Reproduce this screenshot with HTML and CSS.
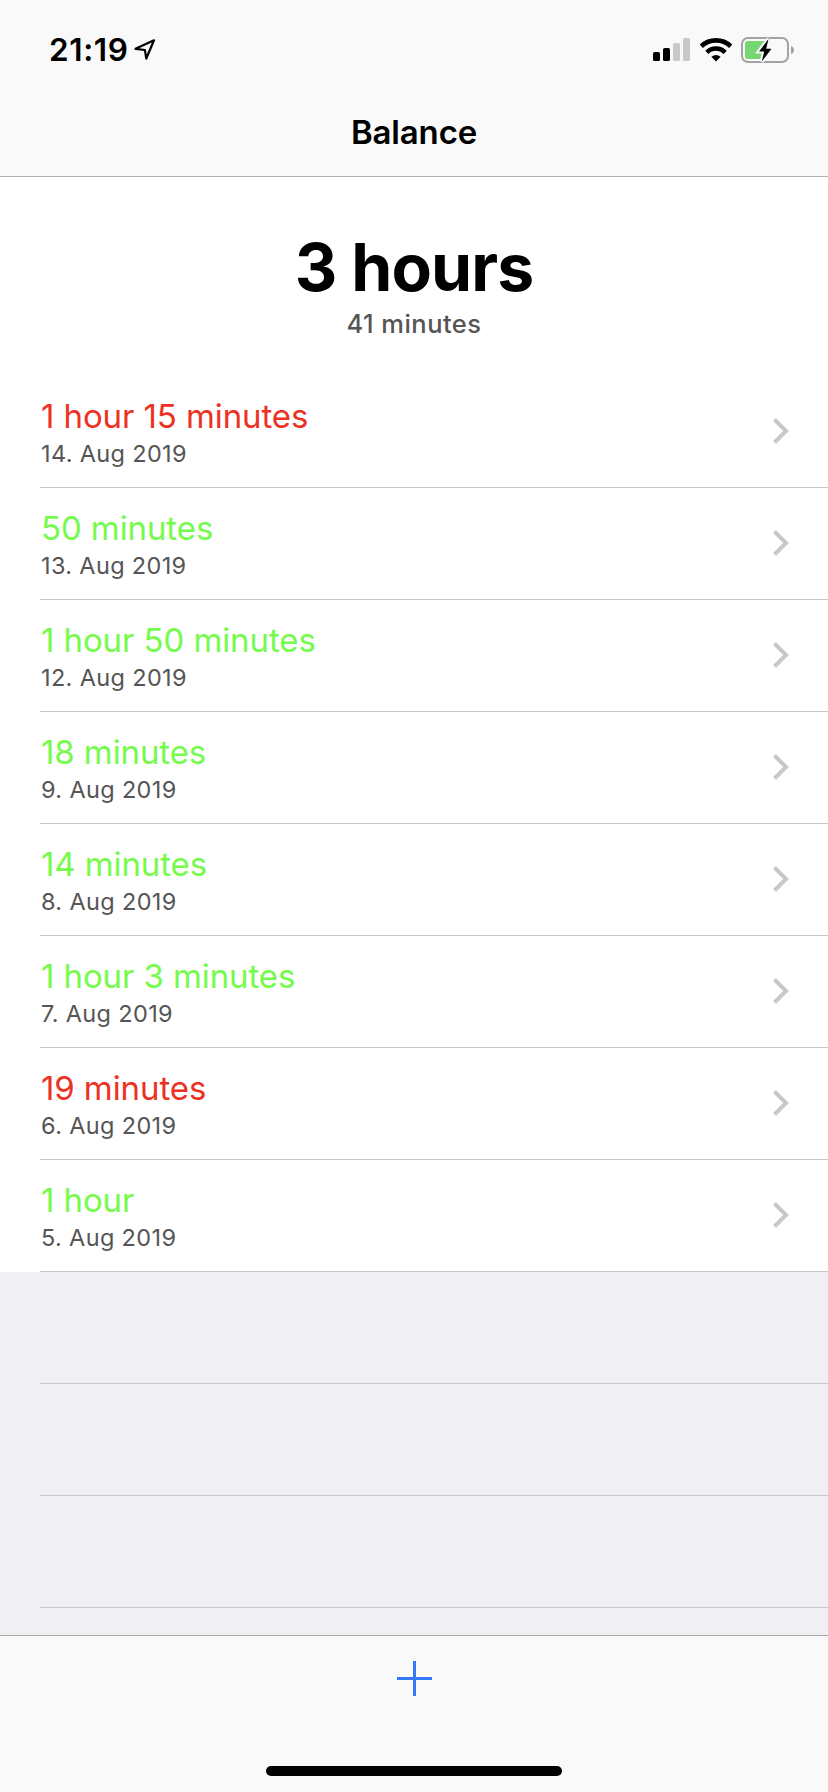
FILE: index.html
```html
<!DOCTYPE html>
<html lang="en">
<head>
    <meta charset="UTF-8">
    <meta name="viewport" content="width=device-width, initial-scale=1.0">
    <title>Balance</title>
    <link rel="stylesheet" href="styles.css">
</head>
<body>
    <div class="screen">
        <header class="navbar">
            <div class="status">
                <div class="clock">
                    <span class="time">21:19</span>
                    <svg class="location" width="24" height="24" viewBox="0 0 24 24">
                        <path d="M2.5 10.8 L21 2.3 L13.3 20.5 L11.9 12 Z" fill="none" stroke="#000" stroke-width="2.2" stroke-linejoin="round"/>
                    </svg>
                </div>
                <div class="indicators">
                    <svg width="37" height="24" viewBox="0 0 37 24">
                        <rect x="0" y="14" width="7" height="9" rx="1.6"/>
                        <rect x="10" y="10" width="7" height="13" rx="1.6"/>
                        <rect x="20" y="5" width="7" height="18" rx="1.6" fill="#c8c8c8"/>
                        <rect x="30" y="0" width="7" height="23" rx="1.6" fill="#c8c8c8"/>
                    </svg>
                    <svg class="wifi" width="34" height="24" viewBox="0 0 34 24">
                        <path d="M2.3 8.2 A21.5 21.5 0 0 1 31.7 8.2" fill="none" stroke="#000" stroke-width="4.6"/>
                        <path d="M7.8 14.3 A13.2 13.2 0 0 1 26.2 14.3" fill="none" stroke="#000" stroke-width="4.4"/>
                        <path d="M12.4 18.8 Q17 15.2 21.6 18.8 L17 23.4 Z"/>
                    </svg>
                    <svg class="battery" width="54" height="26" viewBox="0 0 54 26">
                        <rect x="1" y="1" width="46" height="24" rx="6" fill="none" stroke="#a3a3a3" stroke-width="2"/>
                        <path d="M6.5 4 H24 V22 H6.5 Q4 22 4 19.5 V6.5 Q4 4 6.5 4 Z" fill="#76d672"/>
                        <path d="M50 9 Q53 10 53 13 Q53 16 50 17 Z" fill="#a3a3a3"/>
                        <path d="M27.5 2 L18 14.5 H23.2 L20.8 24.5 L30.5 11.7 H25.2 Z" stroke="#f9f9f9" stroke-width="4"/>
                        <path d="M27.5 2 L18 14.5 H23.2 L20.8 24.5 L30.5 11.7 H25.2 Z"/>
                    </svg>
                </div>
            </div>
            <h1>Balance</h1>
        </header>

        <section class="summary">
            <p class="hours">3 hours</p>
            <p class="minutes">41 minutes</p>
        </section>

        <ul class="list">
            <li class="row">
                <div><p class="amount minus">1 hour 15 minutes</p><p class="date">14. Aug 2019</p></div>
                <svg class="chevron" width="16" height="26" viewBox="0 0 16 26"><path d="M1.5 1.5 L13 13 L1.5 24.5"/></svg>
            </li>
            <li class="row">
                <div><p class="amount">50 minutes</p><p class="date">13. Aug 2019</p></div>
                <svg class="chevron" width="16" height="26" viewBox="0 0 16 26"><path d="M1.5 1.5 L13 13 L1.5 24.5"/></svg>
            </li>
            <li class="row">
                <div><p class="amount">1 hour 50 minutes</p><p class="date">12. Aug 2019</p></div>
                <svg class="chevron" width="16" height="26" viewBox="0 0 16 26"><path d="M1.5 1.5 L13 13 L1.5 24.5"/></svg>
            </li>
            <li class="row">
                <div><p class="amount">18 minutes</p><p class="date">9. Aug 2019</p></div>
                <svg class="chevron" width="16" height="26" viewBox="0 0 16 26"><path d="M1.5 1.5 L13 13 L1.5 24.5"/></svg>
            </li>
            <li class="row">
                <div><p class="amount">14 minutes</p><p class="date">8. Aug 2019</p></div>
                <svg class="chevron" width="16" height="26" viewBox="0 0 16 26"><path d="M1.5 1.5 L13 13 L1.5 24.5"/></svg>
            </li>
            <li class="row">
                <div><p class="amount">1 hour 3 minutes</p><p class="date">7. Aug 2019</p></div>
                <svg class="chevron" width="16" height="26" viewBox="0 0 16 26"><path d="M1.5 1.5 L13 13 L1.5 24.5"/></svg>
            </li>
            <li class="row">
                <div><p class="amount minus">19 minutes</p><p class="date">6. Aug 2019</p></div>
                <svg class="chevron" width="16" height="26" viewBox="0 0 16 26"><path d="M1.5 1.5 L13 13 L1.5 24.5"/></svg>
            </li>
            <li class="row">
                <div><p class="amount">1 hour</p><p class="date">5. Aug 2019</p></div>
                <svg class="chevron" width="16" height="26" viewBox="0 0 16 26"><path d="M1.5 1.5 L13 13 L1.5 24.5"/></svg>
            </li>
        </ul>

        <!-- empty rows below the last entry -->
        <div class="empty">
            <div class="row"></div>
            <div class="row"></div>
            <div class="row"></div>
        </div>

        <footer class="toolbar">
            <button class="add" aria-label="Add">
                <svg width="35" height="35" viewBox="0 0 35 35"><path d="M16 0 H19 V16 H35 V19 H19 V35 H16 V19 H0 V16 H16 Z" fill="#3478f6"/></svg>
            </button>
            <div class="home"></div>
        </footer>
    </div>
</body>
</html>
```
FILE: styles.css
```css
* {
    box-sizing: border-box;
}

body {
    margin: 0;
    font-family: Inter, "Liberation Sans", sans-serif;
    background: #efeff4;
    color: #000;
}

h1, p, ul {
    margin: 0;
    padding: 0;
}

svg {
    display: block;
}

.screen {
    display: flex;
    flex-direction: column;
    height: 1792px;
    overflow: hidden;
}

.navbar {
    height: 177px;
    background: #f9f9f9;
    border-bottom: 1px solid #b2b2b2;
}

.status {
    display: flex;
    justify-content: space-between;
    height: 88px;
    padding: 30px 33px 0 49px;
}

.clock {
    display: flex;
}

.time {
    font-size: 31.5px;
    font-weight: 600;
    line-height: 40px;
    letter-spacing: 0.6px;
}

.location {
    margin: 8px 0 0 5px;
}

.indicators {
    display: flex;
    padding-top: 8px;
}

.wifi {
    margin-left: 9px;
}

.battery {
    margin: -1px 0 0 8px;
}

h1 {
    padding-top: 24px;
    font-size: 33px;
    font-weight: 600;
    line-height: 40px;
    letter-spacing: -0.15px;
    text-align: center;
}

.summary {
    height: 199px;
    padding-top: 50px;
    background: #fff;
    text-align: center;
}

.hours {
    font-size: 66px;
    font-weight: 700;
    line-height: 80px;
    letter-spacing: -0.9px;
}

.minutes {
    font-size: 25.5px;
    font-weight: 500;
    line-height: 30px;
    margin-top: 2px;
    letter-spacing: 0.45px;
    color: #555;
}

.list {
    list-style: none;
    background: #fff;
}

.row {
    display: flex;
    justify-content: space-between;
    height: 112px;
    margin-left: 40px;
    padding: 20px 39px 0 1px;
    border-bottom: 1px solid #c8c7cc;
}

.amount {
    font-size: 33px;
    line-height: 40px;
    letter-spacing: -0.1px;
    color: #75fb4c;
}

.minus {
    color: #eb3223;
}

.date {
    margin-top: 4px;
    font-size: 23.5px;
    line-height: 28px;
    letter-spacing: 0.35px;
    color: #555;
}

.chevron {
    margin-top: 22px;
}

.chevron path {
    fill: none;
    stroke: #c7c7cc;
    stroke-width: 4;
}

.empty {
    flex: 1;
    min-height: 0;
}

.toolbar {
    display: flex;
    flex-direction: column;
    align-items: center;
    justify-content: space-between;
    height: 157px;
    padding: 25px 0 16px;
    background: #f9f9f9;
    border-top: 1px solid #a7a7aa;
}

.add {
    padding: 0;
    border: none;
    background: none;
}

.home {
    width: 296px;
    height: 10px;
    border-radius: 5px;
    background: #000;
}
```
